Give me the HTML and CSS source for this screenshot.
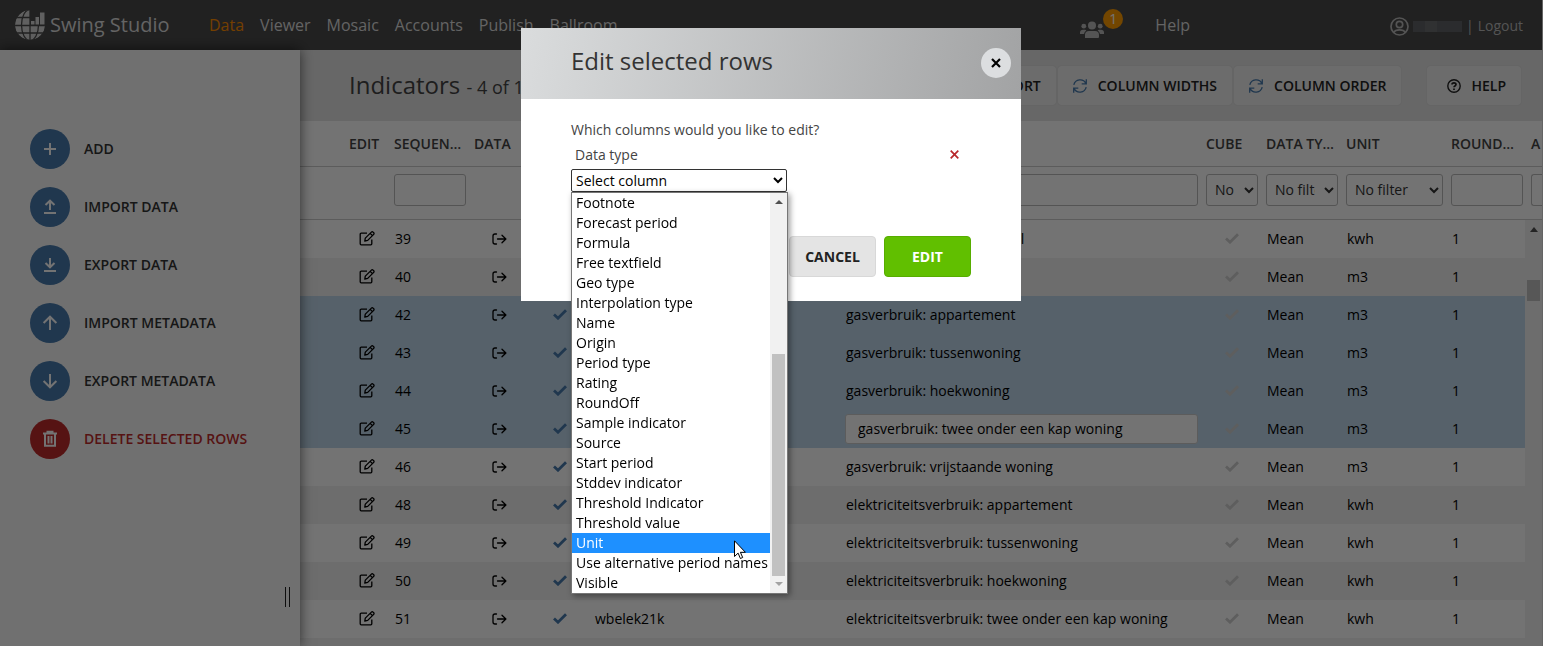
FILE: index.html
```html
<!DOCTYPE html>
<html lang="en">
<head>
<meta charset="utf-8">
<title>Swing Studio</title>
<link rel="stylesheet" href="styles.css">
</head>
<body>
<svg class="sprite" aria-hidden="true">
  <symbol id="edit" viewBox="0 0 16 15"><g fill="none" stroke="currentColor" stroke-width="1.300" stroke-linejoin="round"><path d="M8 2.2H2.2a1 1 0 0 0-1 1v9.600a1 1 0 0 0 1 1h9.600a1 1 0 0 0 1-1V8.500"/><path d="M5.800 10l.5-2.900 6.100-6a1.200 1.200 0 0 1 1.700 0l.6.6a1.200 1.200 0 0 1 0 1.700l-6 6L5.800 10zM11.200 2.400l2.300 2.300"/></g></symbol>
  <symbol id="exit" viewBox="0 0 15 12"><g fill="none" stroke="currentColor" stroke-width="1.300" stroke-linecap="round" stroke-linejoin="round"><path d="M4.500 1H3a2 2 0 0 0-2 2v6a2 2 0 0 0 2 2h1.500M5.500 6h8.200M10 2.200L13.900 6 10 9.800"/></g></symbol>
  <symbol id="check" viewBox="0 0 14 11"><path d="M1 5.500l4 3.700L13 1.200" fill="none" stroke="currentColor" stroke-width="2.800"/></symbol>
  <symbol id="refresh" viewBox="0 0 16 16"><g fill="none" stroke="currentColor" stroke-width="1.300"><path d="M14.300 1.200v4.600H9.700M14 5.600A6.500 6.500 0 0 0 1.800 6.900M1.700 14.800v-4.600h4.600M2 10.400a6.500 6.500 0 0 0 12.200-1.300"/></g></symbol>
</svg>
<div class="page">
  <header class="topbar">
    <a class="brand" href="#">
      <svg width="30" height="30" viewBox="0 0 30 30"><defs><clipPath id="globe"><path d="M15 0v15h15A15 15 0 1 1 15 0z"/></clipPath></defs><g clip-path="url(#globe)"><circle cx="15" cy="15" r="15" fill="#d4d4d4"/><g fill="none" stroke="#4a4a4a" stroke-width="1.300"><ellipse cx="15" cy="15" rx="8.500" ry="15.500"/><path d="M15 0v30M0 7.500h15M0 15.500h30M0 23h30"/></g></g><path d="M16 11h3.500v3.500H16zM20.500 7H24v7.500h-3.500zM25 2.500h4.500v12H25z" fill="#d4d4d4"/></svg>
      <span>Swing Studio</span>
    </a>
    <nav class="nav">
      <a class="active" href="#">Data</a><a href="#">Viewer</a><a href="#">Mosaic</a><a href="#">Accounts</a><a href="#">Publish</a><a href="#">Ballroom</a>
    </nav>
    <div class="tools">
      <a class="users" href="#" aria-label="Online users">
        <svg width="24" height="17" viewBox="0 0 24 17" fill="currentColor"><circle cx="12" cy="4.500" r="4"/><circle cx="3.800" cy="5.200" r="2.400"/><circle cx="20.200" cy="5.200" r="2.400"/><path d="M5 17v-3a4 4 0 0 1 4-4h6a4 4 0 0 1 4 4v2a1 1 0 0 1-1 1zM0 13v-1.500A3 3 0 0 1 3 8.700h2.300l1 .7A5.500 5.500 0 0 0 4 13zM24 13v-1.500a3 3 0 0 0-3-2.800h-2.300l-1 .7A5.500 5.500 0 0 1 20 13z"/></svg>
        <span class="badge">1</span>
      </a>
      <a class="help-link" href="#">Help</a>
      <div class="account">
        <svg width="19" height="19" viewBox="0 0 19 19" fill="none" stroke="currentColor" stroke-width="1.700"><circle cx="9.500" cy="9.500" r="8.500"/><circle cx="9.500" cy="7.500" r="3.200"/><path d="M3.700 15.500c1.200-2.300 2.800-2.700 5.800-2.700s4.600.4 5.800 2.700"/></svg>
        <span class="username"><i></i><i></i><i></i><i></i></span>
        <span>|</span><a href="#">Logout</a>
      </div>
    </div>
  </header>
  <div class="workspace">
    <aside class="sidebar">
      <button class="action"><span class="disc"><svg width="20" height="20" viewBox="0 0 20 20"><path d="M10 4v12M4 10h12"/></svg></span>ADD</button>
      <button class="action"><span class="disc"><svg width="20" height="20" viewBox="0 0 20 20"><path d="M10 13V4M5.500 8L10 3.700 14.500 8M4 16h12"/></svg></span>IMPORT DATA</button>
      <button class="action"><span class="disc"><svg width="20" height="20" viewBox="0 0 20 20"><path d="M10 3v9M5.500 8l4.500 4.300L14.500 8M4 16h12"/></svg></span>EXPORT DATA</button>
      <button class="action"><span class="disc"><svg width="20" height="20" viewBox="0 0 20 20"><path d="M10 17V4M3.600 10L10 3.700l6.400 6.300"/></svg></span>IMPORT METADATA</button>
      <button class="action"><span class="disc"><svg width="20" height="20" viewBox="0 0 20 20"><path d="M10 3v13M3.600 10l6.400 6.300 6.400-6.300"/></svg></span>EXPORT METADATA</button>
      <button class="action danger"><span class="disc"><svg width="20" height="20" viewBox="0 0 20 20"><path d="M3 4.500h14M7.500 4V2.800h5V4M5 4.500v12.200h10V4.500M8.500 7v7.500M11.500 7v7.500"/></svg></span>DELETE SELECTED ROWS</button>
      <div class="handle"></div>
    </aside>
    <main class="content">
      <div class="toolbar">
        <h1>Indicators <small>- 4 of 168 selected</small></h1>
        <div class="buttons">
          <button class="tool"><svg width="16" height="16"><use href="#refresh"/></svg>SORT</button>
          <button class="tool"><svg width="16" height="16"><use href="#refresh"/></svg>COLUMN WIDTHS</button>
          <button class="tool"><svg width="16" height="16"><use href="#refresh"/></svg>COLUMN ORDER</button>
          <button class="tool help"><svg width="14" height="14" viewBox="0 0 14 14" fill="none" stroke="currentColor" stroke-width="1.400"><circle cx="7" cy="7" r="6.200"/><path d="M5 5.600c0-2.400 4-2.300 4 0C9 7 7 7 7 8.300M7 9.400v1.500" stroke-width="1.700"/></svg>HELP</button>
        </div>
      </div>
      <table class="grid head">
        <colgroup><col class="w90"><col class="w80"><col class="w70"><col class="w50"><col class="w251"><col><col class="w60"><col class="w80"><col class="w105"><col class="w80"><col class="w15"></colgroup>
        <thead>
          <tr><th class="first">EDIT</th><th>SEQUEN…</th><th>DATA</th><th></th><th></th><th></th><th>CUBE</th><th>DATA TY…</th><th>UNIT</th><th>ROUND…</th><th>A</th></tr>
          <tr class="filters">
            <td></td><td><input aria-label="Filter sequence"></td><td></td><td></td><td></td><td><input aria-label="Filter name"></td>
            <td><select aria-label="Filter cube"><option>No filter</option></select></td>
            <td><select aria-label="Filter data type"><option>No filter</option></select></td>
            <td><select aria-label="Filter unit"><option>No filter</option></select></td>
            <td><input aria-label="Filter round off"></td><td><input class="clipped" aria-label="Filter"></td>
          </tr>
        </thead>
      </table>
      <div class="scroller">
        <table class="grid rows">
          <colgroup><col class="w90"><col class="w80"><col class="w70"><col class="w50"><col class="w251"><col><col class="w60"><col class="w80"><col class="w105"><col class="w78"></colgroup>
          <tbody>
            <tr><td class="i-edit"><svg width="16" height="15"><use href="#edit"/></svg></td><td>39</td><td class="i-exit"><svg width="15" height="12"><use href="#exit"/></svg></td><td class="i-check"><svg width="14" height="11"><use href="#check"/></svg></td><td></td><td>elektriciteitsverbruik: totaal</td><td class="i-cube"><svg width="14" height="11"><use href="#check"/></svg></td><td>Mean</td><td>kwh</td><td>1</td></tr>
            <tr><td class="i-edit"><svg width="16" height="15"><use href="#edit"/></svg></td><td>40</td><td class="i-exit"><svg width="15" height="12"><use href="#exit"/></svg></td><td class="i-check"><svg width="14" height="11"><use href="#check"/></svg></td><td></td><td>gasverbruik: totaal</td><td class="i-cube"><svg width="14" height="11"><use href="#check"/></svg></td><td>Mean</td><td>m3</td><td>1</td></tr>
            <tr class="selected"><td class="i-edit"><svg width="16" height="15"><use href="#edit"/></svg></td><td>42</td><td class="i-exit"><svg width="15" height="12"><use href="#exit"/></svg></td><td class="i-check"><svg width="14" height="11"><use href="#check"/></svg></td><td></td><td>gasverbruik: appartement</td><td class="i-cube"><svg width="14" height="11"><use href="#check"/></svg></td><td>Mean</td><td>m3</td><td>1</td></tr>
            <tr class="selected"><td class="i-edit"><svg width="16" height="15"><use href="#edit"/></svg></td><td>43</td><td class="i-exit"><svg width="15" height="12"><use href="#exit"/></svg></td><td class="i-check"><svg width="14" height="11"><use href="#check"/></svg></td><td></td><td>gasverbruik: tussenwoning</td><td class="i-cube"><svg width="14" height="11"><use href="#check"/></svg></td><td>Mean</td><td>m3</td><td>1</td></tr>
            <tr class="selected"><td class="i-edit"><svg width="16" height="15"><use href="#edit"/></svg></td><td>44</td><td class="i-exit"><svg width="15" height="12"><use href="#exit"/></svg></td><td class="i-check"><svg width="14" height="11"><use href="#check"/></svg></td><td></td><td>gasverbruik: hoekwoning</td><td class="i-cube"><svg width="14" height="11"><use href="#check"/></svg></td><td>Mean</td><td>m3</td><td>1</td></tr>
            <tr class="selected"><td class="i-edit"><svg width="16" height="15"><use href="#edit"/></svg></td><td>45</td><td class="i-exit"><svg width="15" height="12"><use href="#exit"/></svg></td><td class="i-check"><svg width="14" height="11"><use href="#check"/></svg></td><td></td><td class="editing"><input aria-label="Name" value="gasverbruik: twee onder een kap woning"></td><td class="i-cube"><svg width="14" height="11"><use href="#check"/></svg></td><td>Mean</td><td>m3</td><td>1</td></tr>
            <tr><td class="i-edit"><svg width="16" height="15"><use href="#edit"/></svg></td><td>46</td><td class="i-exit"><svg width="15" height="12"><use href="#exit"/></svg></td><td class="i-check"><svg width="14" height="11"><use href="#check"/></svg></td><td></td><td>gasverbruik: vrijstaande woning</td><td class="i-cube"><svg width="14" height="11"><use href="#check"/></svg></td><td>Mean</td><td>m3</td><td>1</td></tr>
            <tr><td class="i-edit"><svg width="16" height="15"><use href="#edit"/></svg></td><td>48</td><td class="i-exit"><svg width="15" height="12"><use href="#exit"/></svg></td><td class="i-check"><svg width="14" height="11"><use href="#check"/></svg></td><td></td><td>elektriciteitsverbruik: appartement</td><td class="i-cube"><svg width="14" height="11"><use href="#check"/></svg></td><td>Mean</td><td>kwh</td><td>1</td></tr>
            <tr><td class="i-edit"><svg width="16" height="15"><use href="#edit"/></svg></td><td>49</td><td class="i-exit"><svg width="15" height="12"><use href="#exit"/></svg></td><td class="i-check"><svg width="14" height="11"><use href="#check"/></svg></td><td></td><td>elektriciteitsverbruik: tussenwoning</td><td class="i-cube"><svg width="14" height="11"><use href="#check"/></svg></td><td>Mean</td><td>kwh</td><td>1</td></tr>
            <tr><td class="i-edit"><svg width="16" height="15"><use href="#edit"/></svg></td><td>50</td><td class="i-exit"><svg width="15" height="12"><use href="#exit"/></svg></td><td class="i-check"><svg width="14" height="11"><use href="#check"/></svg></td><td></td><td>elektriciteitsverbruik: hoekwoning</td><td class="i-cube"><svg width="14" height="11"><use href="#check"/></svg></td><td>Mean</td><td>kwh</td><td>1</td></tr>
            <tr><td class="i-edit"><svg width="16" height="15"><use href="#edit"/></svg></td><td>51</td><td class="i-exit"><svg width="15" height="12"><use href="#exit"/></svg></td><td class="i-check"><svg width="14" height="11"><use href="#check"/></svg></td><td>wbelek21k</td><td>elektriciteitsverbruik: twee onder een kap woning</td><td class="i-cube"><svg width="14" height="11"><use href="#check"/></svg></td><td>Mean</td><td>kwh</td><td>1</td></tr>
            <tr><td colspan="10"></td></tr>
          </tbody>
        </table>
        <div class="scrollbar"><svg width="8" height="5" viewBox="0 0 8 5"><path d="M0 5l4-5 4 5z"/></svg><div class="thumb"></div></div>
      </div>
    </main>
  </div>
</div>

<div class="backdrop">
  <section class="modal" role="dialog" aria-labelledby="dialog-title">
    <header class="modal-head">
      <h2 id="dialog-title">Edit selected rows</h2>
      <button class="close" aria-label="Close"><svg width="10" height="10" viewBox="0 0 10 10"><path d="M1 1l8 8M9 1L1 9" stroke="#000" stroke-width="2.200"/></svg></button>
    </header>
    <div class="modal-body">
      <label for="column">Which columns would you like to edit?</label>
      <div class="chosen"><span>Data type</span><button aria-label="Remove Data type"><svg width="9" height="9" viewBox="0 0 9 9"><path d="M.7.7l7.600 7.600M8.300.7L.7 8.300" stroke="#b8282c" stroke-width="1.700"/></svg></button></div>
      <div class="picker">
        <select id="column"><option>Select column</option></select>
        <div class="popup">
          <ul role="listbox" aria-label="Columns">
            <li role="option">Footnote</li><li role="option">Forecast period</li><li role="option">Formula</li><li role="option">Free textfield</li><li role="option">Geo type</li><li role="option">Interpolation type</li><li role="option">Name</li><li role="option">Origin</li><li role="option">Period type</li><li role="option">Rating</li><li role="option">RoundOff</li><li role="option">Sample indicator</li><li role="option">Source</li><li role="option">Start period</li><li role="option">Stddev indicator</li><li role="option">Threshold Indicator</li><li role="option">Threshold value</li><li role="option" class="hover" aria-selected="true">Unit</li><li role="option">Use alternative period names</li><li role="option">Visible</li>
          </ul>
          <div class="popup-bar"><svg width="8" height="4" viewBox="0 0 8 4"><path d="M0 4l4-4 4 4z" fill="#505050"/></svg><div class="popup-thumb"></div><svg width="8" height="4" viewBox="0 0 8 4"><path d="M0 0l4 4 4-4z" fill="#a3a3a3"/></svg></div>
          <svg class="cursor" width="12" height="20" viewBox="0 0 12 20"><path d="M.5.800v15.700l3.600-3.400 2.300 5.400 2.300-1-2.300-5.200h5z" fill="#fff" stroke="#000"/></svg>
        </div>
      </div>
      <div class="modal-actions"><button class="btn">CANCEL</button><button class="btn primary">EDIT</button></div>
    </div>
  </section>
</div>
</body>
</html>
```

FILE: styles.css
```css
* { box-sizing: border-box; }
body { margin: 0; font: 14px/20px "Open Sans", sans-serif; color: #000; overflow: hidden; }
a { color: inherit; text-decoration: none; }
button, input, select { font: inherit; color: inherit; margin: 0; }
button { border: 0; padding: 0; background: none; }
svg { display: block; flex: none; }
.sprite { position: absolute; width: 0; height: 0; }

.page { display: flex; flex-direction: column; height: 100vh; border-right: 1px solid #ddd; overflow: hidden; }
.topbar { display: flex; align-items: center; flex: none; height: 50px; padding: 0 19px 0 15px; background: #4a4a4a; color: #ddd; font-size: 16px; }
.brand { display: flex; align-items: center; gap: 5px; width: 194px; font-size: 20px; }
.nav { display: flex; gap: 16px; }
.nav .active { color: #ff8c00; }
.tools { display: flex; align-items: center; margin-left: auto; }
.users { position: relative; padding-top: 9px; color: #bbb; margin-right: 51px; }
.badge { position: absolute; left: 23px; top: -3px; width: 20px; height: 20px; border-radius: 50%; background: #ff9c00; color: #fff; font-size: 14px; line-height: 20px; text-align: center; }
.help-link { margin-right: 200px; }
.account { display: flex; align-items: center; gap: 4px; padding-top: 2px; font-size: 14px; color: #bbb; }
.username { display: flex; width: 49px; height: 11px; }
.username i { flex: 1; background: #606366; }
.username i:nth-child(2) { background: #6b6e70; }

.workspace { display: flex; flex: 1; min-height: 0; }
.sidebar { position: relative; z-index: 1; display: flex; flex-direction: column; align-items: flex-start; gap: 18px; flex: 0 0 300px; padding: 79px 30px; background: #f8f8f8; box-shadow: 0 0 12px rgba(0, 0, 0, .6); }
.action { display: flex; align-items: center; gap: 14px; font-weight: 600; color: #333; }
.disc { display: grid; place-items: center; width: 40px; height: 40px; border-radius: 50%; background: #477aad; }
.disc svg { fill: none; stroke: #fff; stroke-width: 2; }
.danger { color: #bf2c2c; }
.danger .disc { background: #bf2c2c; }
.handle { position: absolute; right: 10px; bottom: 39px; width: 5px; height: 20px; border: solid #222; border-width: 0 1px; }

.content { flex: 1; min-width: 0; display: flex; flex-direction: column; background: #fff; }
.toolbar { display: flex; align-items: center; justify-content: space-between; flex: none; height: 71px; padding: 0 21px 0 49px; background: #e5e5e5; white-space: nowrap; }
h1 { margin: 0; font-size: 24px; line-height: 32px; font-weight: 400; color: #444; }
h1 small { font-size: 18px; }
.buttons { display: flex; gap: 2px; }
.tool { display: flex; align-items: center; gap: 10px; height: 39px; padding: 0 15px 0 14px; border-radius: 3px; background: #f0f0f0; box-shadow: 0 0 1px #bbb; font-weight: 600; color: #222; }
.tool svg { color: #477aad; }
.tool.help { margin-left: 24px; padding-left: 20px; }
.tool.help svg { color: #222; }

.grid { width: 100%; table-layout: fixed; border-collapse: collapse; }
.w90 { width: 90px; } .w80 { width: 80px; } .w78 { width: 78px; } .w70 { width: 70px; }
.w60 { width: 60px; } .w50 { width: 50px; } .w251 { width: 251px; } .w105 { width: 105px; } .w15 { width: 15px; }
.head th { height: 45px; padding: 2px 0 0 4px; border-bottom: 1px solid #ccc; font-weight: 600; color: #444; text-align: left; white-space: nowrap; overflow: hidden; }
.head .first { padding-left: 49px; }
.filters td { height: 53px; padding: 7px 4px 0; border-bottom: 1px solid #ccc; vertical-align: top; overflow: hidden; }
.filters td:last-child { padding-right: 0; }
.filters input, .filters select { display: block; width: 100%; height: 32px; border: 1px solid #bbb; border-radius: 3px; background: #fff; color: #333; }
.filters select { padding: 0 6px 0 4px; }
.filters .clipped { border-right: 0; border-radius: 3px 0 0 3px; }
.scroller { display: flex; flex: 1; min-height: 0; align-items: stretch; overflow: hidden; }
.rows { flex: 1; width: auto; min-width: 0; }
.rows tr { background: #fff; }
.rows tr:nth-child(even) { background: #f1f1f1; }
.rows tr.selected { background: #bfd7ea; }
.rows td { height: 38px; padding: 0 0 0 5px; white-space: nowrap; overflow: hidden; }
.rows .i-edit { padding-left: 59px; }
.rows .i-exit { padding-left: 22px; }
.rows .i-check { padding-left: 13px; color: #477aad; }
.rows .i-cube { padding-left: 23px; color: #d0d0d0; }
.rows .editing { padding: 0 4px; }
.editing input { display: block; width: 100%; height: 30px; padding: 0 12px; border: 1px solid #ccc; border-radius: 3px; background: #fff; }
.scrollbar { display: flex; flex-direction: column; align-items: center; flex: 0 0 17px; padding-top: 7px; background: #f1f1f1; }
.scrollbar path { fill: #505050; }
.thumb { width: 13px; height: 21px; margin-top: 48px; background: #c1c1c1; }

.backdrop { position: fixed; inset: 0; z-index: 10; padding: 28px 1px 0 0; background: rgba(0, 0, 0, .55); }
.modal { width: 500px; margin: 0 auto; background: #fff; }
.modal-head { display: flex; align-items: center; justify-content: space-between; height: 71px; padding: 0 10px 2px 50px; background: linear-gradient(100deg, #dadcdd, #a2a3a4); }
h2 { margin: 0; font-size: 24px; line-height: 32px; font-weight: 400; color: #333; padding-bottom: 4px; }
.close { display: grid; place-items: center; width: 30px; height: 30px; border-radius: 50%; background: #dcdee0; }
.modal-body { padding: 21px 50px 24px; color: #444; }
.modal-body label { display: block; line-height: 20px; }
.chosen { display: flex; align-items: center; justify-content: space-between; height: 29px; padding: 0 12px 0 4px; }
.picker { position: relative; width: 216px; color: #000; }
.picker select { display: block; width: 100%; height: 23px; padding: 0; border: 1px solid #333; border-radius: 2px; background: #fff; color: #000; }
.popup { position: absolute; left: 0; top: 23px; z-index: 2; display: flex; width: 217px; border: 1px solid #767676; background: #fff; box-shadow: 2px 2px 6px rgba(0, 0, 0, .4); }
.popup ul { flex: 1; margin: 0; padding: 0; list-style: none; }
.popup li { padding-left: 4px; line-height: 20px; white-space: nowrap; }
.popup .hover { background: #1e90ff; color: #fff; }
.popup-bar { display: flex; flex-direction: column; align-items: center; flex: 0 0 17px; padding: 7px 0; background: #f1f1f1; }
.popup-thumb { flex: none; width: 13px; height: 222px; margin: auto 0 6px; background: #c1c1c1; }
.cursor { position: absolute; left: 162px; top: 347px; }
.modal-actions { display: flex; justify-content: flex-end; gap: 8px; margin-top: 44px; }
.btn { width: 87px; height: 41px; border: 1px solid #d8d8d8; border-radius: 4px; background: #e4e4e4; font-weight: 700; color: #222; }
.primary { border-color: #57ad00; background: #61bf00; color: #fff; }
```
